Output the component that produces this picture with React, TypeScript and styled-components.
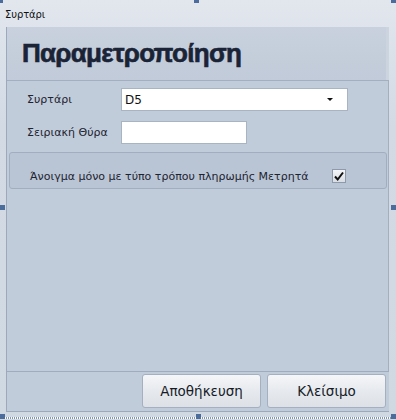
import React from "react";
import styled, { createGlobalStyle } from "styled-components";

const Global = createGlobalStyle`
  html, body { margin: 0; padding: 0; background: #dde3eb; }
  body { font-family: Tahoma, "DejaVu Sans", sans-serif; }
`;

const Frame = styled.div`
  position: relative;
  width: 396px;
  height: 420px;
  box-sizing: border-box;
  background: linear-gradient(#e2e7ee, #d3dae4 30%, #d0d8e2);
  display: flex;
  flex-direction: column;
  overflow: hidden;
`;

const Caption = styled.div`
  height: 27px;
  box-sizing: border-box;
  padding: 9px 0 0 5px;
  font-family: "DejaVu Sans", sans-serif;
  font-size: 10px;
  color: #111;
  letter-spacing: -0.1px;
`;

const Panel = styled.div`
  margin-left: 6px;
  width: 383px;
  height: 385px;
  box-sizing: border-box;
  border-left: 1px solid #9ca9ba;
  border-bottom: 1px solid #9ca9ba;
  background: #c1ccda;
  display: flex;
  flex-direction: column;
`;

const Header = styled.div`
  height: 53px;
  box-sizing: border-box;
  padding: 11px 0 0 15px;
  background: linear-gradient(#c8d1dd, #c1cbd9);
  border-right: 3px solid #ccd4df;
`;

const Title = styled.h1`
  margin: 0;
  font-family: "Liberation Sans", Arial, sans-serif;
  font-weight: bold;
  font-size: 26px;
  line-height: 30px;
  letter-spacing: -0.7px;
  color: #1a2436;
  -webkit-text-stroke: 0.6px #1a2436;
`;

const Section = styled.div`
  flex: 1;
  box-sizing: border-box;
  border-top: 1px solid #a3afc0;
  border-right: 1px solid #a3afc0;
  padding: 7px 0 0 1px;
  display: flex;
  flex-direction: column;
`;

const Row = styled.div<{ gap: number }>`
  display: flex;
  align-items: center;
  height: 23px;
  margin-bottom: ${(p) => p.gap}px;
`;

const Label = styled.span`
  width: 94px;
  padding-left: 19px;
  font-family: "DejaVu Sans", sans-serif;
  font-size: 11px;
  color: #1d2330;
`;

const Field = styled.div<{ w: number }>`
  width: ${(p) => p.w}px;
  height: 23px;
  box-sizing: border-box;
  background: #fff;
  border: 1px solid #a9b4c2;
  display: flex;
  align-items: center;
  justify-content: space-between;
  padding: 0 14px 0 3px;
  font-family: "DejaVu Sans", sans-serif;
  font-size: 12px;
  color: #111;
`;

const Arrow = styled.span`
  width: 0;
  height: 0;
  border-left: 3px solid transparent;
  border-right: 3px solid transparent;
  border-top: 3px solid #111;
`;

const GroupBox = styled.div`
  margin: 0 1px;
  height: 37px;
  box-sizing: border-box;
  background: #b9c5d4;
  border: 1px solid #a2aec0;
  border-radius: 3px;
  display: flex;
  align-items: center;
  padding: 11px 0 0 20px;
`;

const CheckText = styled.span`
  font-family: "DejaVu Sans", sans-serif;
  font-size: 11px;
  color: #1d2330;
  width: 302px;
`;

const Check = styled.span`
  width: 14px;
  height: 14px;
  box-sizing: border-box;
  border: 1px solid #8e9aab;
  background: linear-gradient(#f4f5f7, #d9dde4);
  display: flex;
  align-items: center;
  justify-content: center;
`;

const Footer = styled.div`
  height: 40px;
  box-sizing: border-box;
  border-top: 1px solid #a0acbd;
  display: flex;
  justify-content: flex-end;
  gap: 6px;
  padding: 2px 3px 0 0;
`;

const Button = styled.button`
  width: 119px;
  height: 34px;
  box-sizing: border-box;
  border: 1px solid #a4afbf;
  border-radius: 3px;
  background: linear-gradient(#f5f6f8, #e6e9ee 50%, #dde1e7);
  font-family: "DejaVu Sans", sans-serif;
  font-size: 13.5px;
  color: #161b26;
  padding: 0;
`;

const Handle = styled.span<{ x: number; y: number }>`
  position: absolute;
  left: ${(p) => p.x}px;
  top: ${(p) => p.y}px;
  width: 5px;
  height: 5px;
  background: #4c6c9c;
`;

const DottedEdge = styled.div`
  position: absolute;
  left: 0;
  right: 0;
  bottom: 1px;
  height: 2px;
  background: repeating-linear-gradient(90deg, #7f97ba 0 1px, #ffffff 1px 2px);
`;

export default function App() {
  return (
    <>
      <Global />
      <Frame>
        <Caption>Συρτάρι</Caption>
        <Panel>
          <Header>
            <Title>Παραμετροποίηση</Title>
          </Header>
          <Section>
            <Row gap={10}>
              <Label>Συρτάρι</Label>
              <Field w={227}>
                D5
                <Arrow />
              </Field>
            </Row>
            <Row gap={8}>
              <Label>Σειριακή Θύρα</Label>
              <Field w={126} />
            </Row>
            <GroupBox>
              <CheckText>Άνοιγμα μόνο με τύπο τρόπου πληρωμής Μετρητά</CheckText>
              <Check>
                <svg width="12" height="12" viewBox="0 0 12 12">
                  <path d="M2 6.5 L4.7 9.5 L10 2.5" fill="none" stroke="#111" strokeWidth="2" />
                </svg>
              </Check>
            </GroupBox>
          </Section>
          <Footer>
            <Button>Αποθήκευση</Button>
            <Button>Κλείσιμο</Button>
          </Footer>
        </Panel>
        <DottedEdge />
        <Handle x={-2} y={-2} />
        <Handle x={194} y={-2} />
        <Handle x={391} y={-2} />
        <Handle x={0} y={205} />
        <Handle x={391} y={205} />
        <Handle x={0} y={414} />
        <Handle x={196} y={414} />
        <Handle x={391} y={414} />
      </Frame>
    </>
  );
}
